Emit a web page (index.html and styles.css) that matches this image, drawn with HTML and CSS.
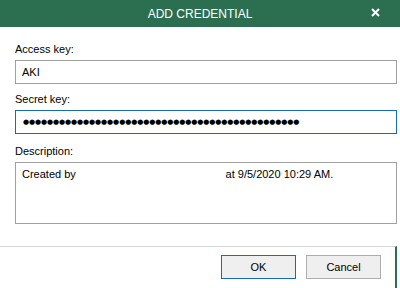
FILE: index.html
```html
<!DOCTYPE html>
<html lang="en">
<head>
    <meta charset="UTF-8">
    <meta name="viewport" content="width=device-width, initial-scale=1.0">
    <title>Add Credential</title>
    <link rel="stylesheet" href="styles.css">
</head>
<body>
    <div class="window">
        <div class="titlebar">
            <span class="title">ADD CREDENTIAL</span>
            <span class="close">
                <svg width="9" height="9" viewBox="0 0 9 9">
                    <path d="M1 1 L8 8 M8 1 L1 8" stroke="#fff" stroke-width="2" fill="none"/>
                </svg>
            </span>
        </div>
        <form class="content" id="credentialForm">
            <div class="form-group first">
                <label for="accessKey">Access key:</label>
                <input type="text" id="accessKey" name="accessKey" value="AKI">
            </div>
            <div class="form-group">
                <label for="secretKey">Secret key:</label>
                <input type="text" id="secretKey" name="secretKey" class="secret focused" value="●●●●●●●●●●●●●●●●●●●●●●●●●●●●●●●●●●●●●●●●●●●●●●">
            </div>
            <div class="form-group desc">
                <label for="description">Description:</label>
                <textarea id="description" name="description">Created by                                                 at 9/5/2020 10:29 AM.</textarea>
            </div>
        </form>
        <div class="footer">
            <button type="submit" form="credentialForm" class="default">OK</button>
            <button type="button">Cancel</button>
        </div>
    </div>
</body>
</html>
```

FILE: styles.css
```css
body {
    margin: 0;
    width: 400px;
    height: 288px;
    background: #fff;
    font-family: "Liberation Sans", Arial, sans-serif;
    font-size: 11px;
    color: #000;
    overflow: hidden;
}
.window {
    width: 400px;
    height: 288px;
    display: flex;
    flex-direction: column;
}
.titlebar {
    height: 27px;
    background: #2b6f50;
    color: #fff;
    display: flex;
    align-items: center;
    justify-content: center;
    position: relative;
    font-size: 12px;
}
.close {
    position: absolute;
    left: 371px;
    top: 8px;
    width: 9px;
    height: 9px;
    display: flex;
}
.content {
    width: 382px;
    padding: 15px 14px 0 15px;
    margin: 0;
    border-right: 2px solid #2b6f50;
    flex: 1;
    display: flex;
    flex-direction: column;
}
.form-group {
    display: flex;
    flex-direction: column;
    margin-top: 8px;
}
.form-group.first {
    margin-top: 0;
}
.form-group.desc {
    margin-top: 10px;
}
label {
    line-height: 15px;
    margin-bottom: 3px;
}
input, textarea {
    height: 24px;
    border: 1px solid #a0a0a0;
    box-sizing: border-box;
    margin: 0;
    padding: 0 6px;
    font-family: "Liberation Sans", Arial, sans-serif;
    font-size: 11px;
    color: #000;
    background: #fff;
    outline: none;
}
input.focused {
    border-color: #1a69b3;
}
input.secret {
    font-family: "DejaVu Sans", sans-serif;
    font-size: 7px;
    letter-spacing: -0.1px;
    padding-left: 7px;
}
textarea {
    height: 62px;
    padding: 4px 6px;
    resize: none;
    line-height: 14px;
    white-space: pre;
}
.footer {
    width: 397px;
    height: 42px;
    box-sizing: border-box;
    border-top: 1px solid #d6d6d6;
    border-right: 2px solid #2b6f50;
    padding: 8px 14px 0 0;
    display: flex;
    justify-content: flex-end;
    align-items: flex-start;
    gap: 10px;
}
button {
    width: 75px;
    height: 24px;
    background: #efefef;
    border: 1px solid #adadad;
    border-radius: 0;
    font-family: "Liberation Sans", Arial, sans-serif;
    font-size: 11px;
    color: #000;
    padding: 0;
}
button.default {
    border-color: #1a69b3;
}
```
